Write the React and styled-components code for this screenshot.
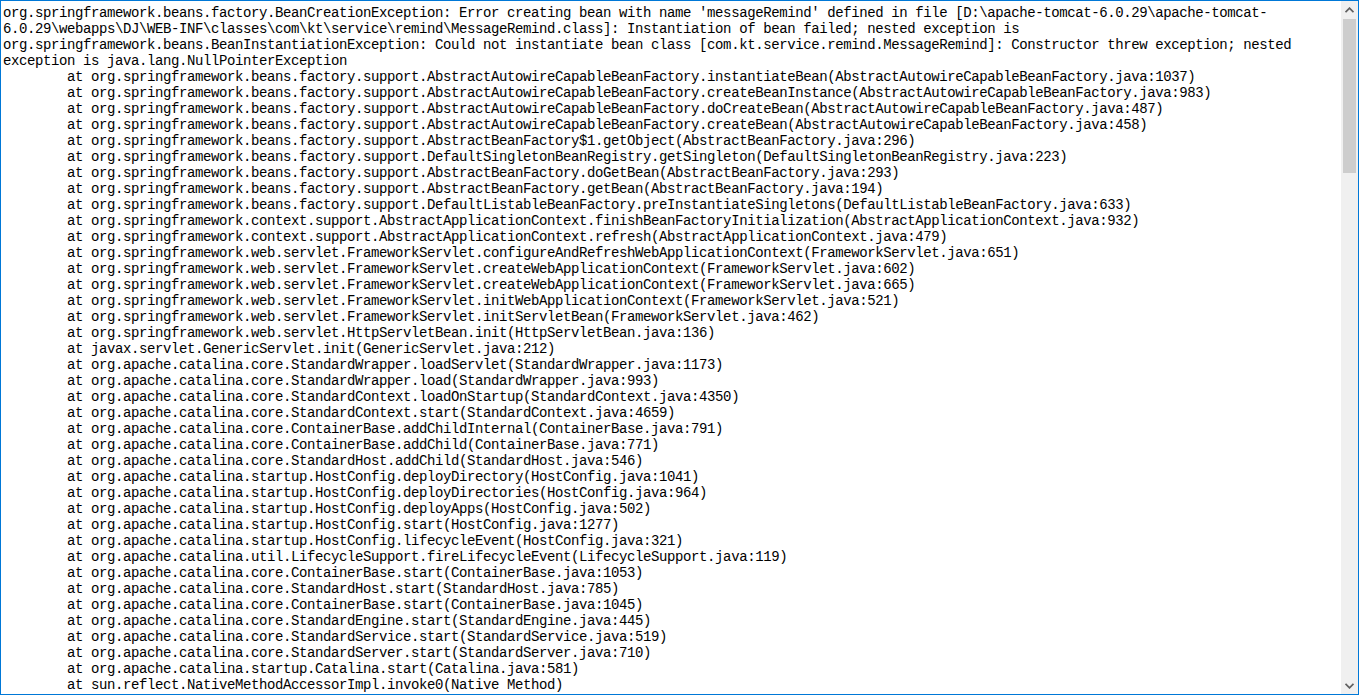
import React from "react";
import styled, { createGlobalStyle } from "styled-components";

const GlobalStyle = createGlobalStyle`
  html, body {
    margin: 0;
    padding: 0;
    background: #ffffff;
    overflow: hidden;
  }
`;

const header = [
  "org.springframework.beans.factory.BeanCreationException: Error creating bean with name 'messageRemind' defined in file [D:\\apache-tomcat-6.0.29\\apache-tomcat-",
  "6.0.29\\webapps\\DJ\\WEB-INF\\classes\\com\\kt\\service\\remind\\MessageRemind.class]: Instantiation of bean failed; nested exception is",
  "org.springframework.beans.BeanInstantiationException: Could not instantiate bean class [com.kt.service.remind.MessageRemind]: Constructor threw exception; nested",
  "exception is java.lang.NullPointerException",
];

const frames = [
  "org.springframework.beans.factory.support.AbstractAutowireCapableBeanFactory.instantiateBean(AbstractAutowireCapableBeanFactory.java:1037)",
  "org.springframework.beans.factory.support.AbstractAutowireCapableBeanFactory.createBeanInstance(AbstractAutowireCapableBeanFactory.java:983)",
  "org.springframework.beans.factory.support.AbstractAutowireCapableBeanFactory.doCreateBean(AbstractAutowireCapableBeanFactory.java:487)",
  "org.springframework.beans.factory.support.AbstractAutowireCapableBeanFactory.createBean(AbstractAutowireCapableBeanFactory.java:458)",
  "org.springframework.beans.factory.support.AbstractBeanFactory$1.getObject(AbstractBeanFactory.java:296)",
  "org.springframework.beans.factory.support.DefaultSingletonBeanRegistry.getSingleton(DefaultSingletonBeanRegistry.java:223)",
  "org.springframework.beans.factory.support.AbstractBeanFactory.doGetBean(AbstractBeanFactory.java:293)",
  "org.springframework.beans.factory.support.AbstractBeanFactory.getBean(AbstractBeanFactory.java:194)",
  "org.springframework.beans.factory.support.DefaultListableBeanFactory.preInstantiateSingletons(DefaultListableBeanFactory.java:633)",
  "org.springframework.context.support.AbstractApplicationContext.finishBeanFactoryInitialization(AbstractApplicationContext.java:932)",
  "org.springframework.context.support.AbstractApplicationContext.refresh(AbstractApplicationContext.java:479)",
  "org.springframework.web.servlet.FrameworkServlet.configureAndRefreshWebApplicationContext(FrameworkServlet.java:651)",
  "org.springframework.web.servlet.FrameworkServlet.createWebApplicationContext(FrameworkServlet.java:602)",
  "org.springframework.web.servlet.FrameworkServlet.createWebApplicationContext(FrameworkServlet.java:665)",
  "org.springframework.web.servlet.FrameworkServlet.initWebApplicationContext(FrameworkServlet.java:521)",
  "org.springframework.web.servlet.FrameworkServlet.initServletBean(FrameworkServlet.java:462)",
  "org.springframework.web.servlet.HttpServletBean.init(HttpServletBean.java:136)",
  "javax.servlet.GenericServlet.init(GenericServlet.java:212)",
  "org.apache.catalina.core.StandardWrapper.loadServlet(StandardWrapper.java:1173)",
  "org.apache.catalina.core.StandardWrapper.load(StandardWrapper.java:993)",
  "org.apache.catalina.core.StandardContext.loadOnStartup(StandardContext.java:4350)",
  "org.apache.catalina.core.StandardContext.start(StandardContext.java:4659)",
  "org.apache.catalina.core.ContainerBase.addChildInternal(ContainerBase.java:791)",
  "org.apache.catalina.core.ContainerBase.addChild(ContainerBase.java:771)",
  "org.apache.catalina.core.StandardHost.addChild(StandardHost.java:546)",
  "org.apache.catalina.startup.HostConfig.deployDirectory(HostConfig.java:1041)",
  "org.apache.catalina.startup.HostConfig.deployDirectories(HostConfig.java:964)",
  "org.apache.catalina.startup.HostConfig.deployApps(HostConfig.java:502)",
  "org.apache.catalina.startup.HostConfig.start(HostConfig.java:1277)",
  "org.apache.catalina.startup.HostConfig.lifecycleEvent(HostConfig.java:321)",
  "org.apache.catalina.util.LifecycleSupport.fireLifecycleEvent(LifecycleSupport.java:119)",
  "org.apache.catalina.core.ContainerBase.start(ContainerBase.java:1053)",
  "org.apache.catalina.core.StandardHost.start(StandardHost.java:785)",
  "org.apache.catalina.core.ContainerBase.start(ContainerBase.java:1045)",
  "org.apache.catalina.core.StandardEngine.start(StandardEngine.java:445)",
  "org.apache.catalina.core.StandardService.start(StandardService.java:519)",
  "org.apache.catalina.core.StandardServer.start(StandardServer.java:710)",
  "org.apache.catalina.startup.Catalina.start(Catalina.java:581)",
  "sun.reflect.NativeMethodAccessorImpl.invoke0(Native Method)",
];

const Chevron = ({ down }) => (
  <svg width="9" height="6" viewBox="0 0 9 6">
    <path
      d={down ? "M0.5 0.8 L4.5 4.8 L8.5 0.8" : "M0.5 5.2 L4.5 1.2 L8.5 5.2"}
      fill="none"
      stroke="#606060"
      strokeWidth="1.8"
    />
  </svg>
);

const Editor = () => (
  <Window>
    <TextArea>
      {header.map((line, i) => (
        <Line key={`h${i}`}>{line}</Line>
      ))}
      {frames.map((f, i) => (
        <Line key={`f${i}`} $indent>
          at {f}
        </Line>
      ))}
    </TextArea>
    <ScrollBar>
      <ArrowButton>
        <Chevron />
      </ArrowButton>
      <Thumb />
      <Track />
      <ArrowButton>
        <Chevron down />
      </ArrowButton>
    </ScrollBar>
  </Window>
);

export default function App() {
  return (
    <>
      <GlobalStyle />
      <Editor />
    </>
  );
}

const Window = styled.div`
  box-sizing: border-box;
  width: 1359px;
  height: 695px;
  border: 1px solid #0078d7;
  background: #ffffff;
  display: flex;
  overflow: hidden;
`;

const TextArea = styled.div`
  flex: 1;
  min-width: 0;
  padding: 4px 0 0 2px;
  overflow: hidden;
  font-family: "Liberation Mono", "DejaVu Sans Mono", monospace;
  font-size: 14px;
  letter-spacing: -0.4px;
  line-height: 16px;
  color: #000000;
`;

const Line = styled.div`
  white-space: pre;
  height: 16px;
  padding-left: ${(p) => (p.$indent ? "64px" : "0")};
`;

const ScrollBar = styled.div`
  width: 17px;
  flex: none;
  background: #f0f0f0;
  display: flex;
  flex-direction: column;
`;

const ArrowButton = styled.div`
  height: 17px;
  flex: none;
  display: flex;
  align-items: center;
  justify-content: center;
`;

const Thumb = styled.div`
  height: 154px;
  flex: none;
  margin: 1px 2px 0;
  background: #cdcdcd;
`;

const Track = styled.div`
  flex: 1;
`;
